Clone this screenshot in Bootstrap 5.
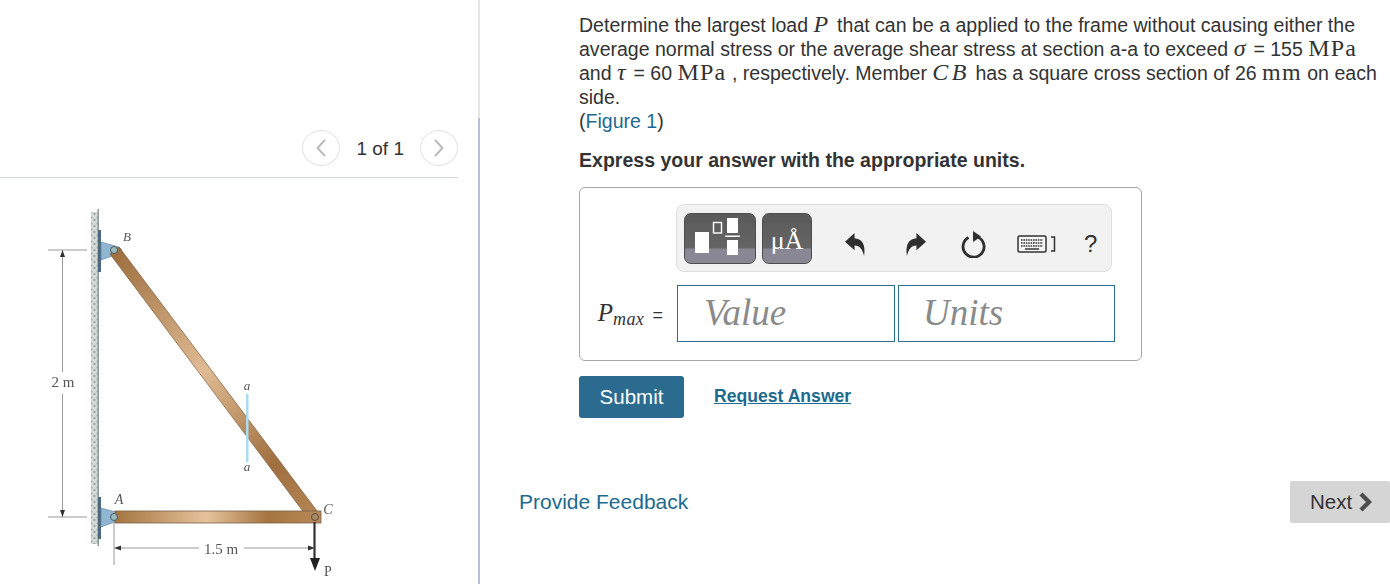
<!DOCTYPE html>
<html lang="en">
<head>
<meta charset="utf-8">
<title>Problem</title>
<link href="https://cdn.jsdelivr.net/npm/bootstrap@5.3.0/dist/css/bootstrap.min.css" rel="stylesheet">
<style>
html,body{height:584px;overflow:hidden;background:#fff}
body{font-family:"Liberation Sans",Arial,sans-serif;font-size:19.550px;line-height:24px;color:#333}
.stage{width:1390px;height:584px}
.fig-pane{width:478px;flex:none}
.pager{width:458px;height:178px;padding-top:130px;border-bottom:1px solid #d4d7da;gap:16px;color:#333}
.page-count{font-size:19px;line-height:38px}
.round-btn{width:38px;height:36px;padding:0;border:1px solid #e4e4e4;border-radius:50%;background:#fff;line-height:0}
.pane-rule{width:2px;flex:none;background:linear-gradient(to bottom,#e6e6e6 0,#e6e6e6 118px,#b3c4da 118px,#b3c4da 100%)}
.fig-svg{display:block;width:458px;height:406px}
.q-pane{flex:1;min-width:0;padding-top:13px}
.q-body{margin-left:99px;width:806px}
.q-text{margin:0}
.q-math{font-family:"Liberation Serif","DejaVu Serif",serif;font-size:24px;line-height:0;letter-spacing:1.200px}
.q-ital{font-style:italic;letter-spacing:2.500px}
.q-wide{letter-spacing:3.500px}
.q-link{color:#1d6a8f;text-decoration:none}
.q-lead{margin:15px 0 0;font-weight:700;color:#333}
.ans-box{width:563px;height:174px;margin-top:15px;border:1px solid #a6a6a6;border-radius:6px;padding:16px 26px 0 17px;background:#fff;font-size:18px}
.tool-strip{margin-left:79px;width:436px;height:68px;padding:7px;background:#f2f2f2;border:1px solid #dedede;border-radius:8px}
.tool-key{height:51px;padding:0;border:1px solid #4d4d4d;border-radius:7px;overflow:hidden;background:linear-gradient(to bottom,#5a5a5a 0,#646464 34px,#8a8794 35px,#8a8794 100%);line-height:0}
.tool-w1{width:72px}
.tool-w2{width:50px;margin-left:6px}
.tool-icon{background:none;border:0;padding:0;line-height:0;color:#333;margin-top:12px}
.tool-undo{margin-left:33px}
.tool-redo{margin-left:39px}
.tool-reset{margin-left:35px}
.tool-keys{margin-left:31px}
.tool-help{margin:11px 0 0 28px;font-size:24px;line-height:1;color:#333}
.ans-row{margin-top:13px;height:57px}
.var-label{width:80px;font-family:"Liberation Serif",serif;font-size:25px;color:#333;white-space:nowrap;padding-right:14px;text-align:right}
.var-label sub{font-size:18px;font-style:italic;bottom:-.25em;letter-spacing:.4px}
.var-label i{font-style:italic}
.var-eq{font-family:"Liberation Sans",sans-serif;font-size:18px;font-style:normal;margin-left:2px}
.ans-input{width:218px;height:57px;border:1px solid #2b6e92;border-radius:0;padding:0 0 2px 26px;font-family:"Liberation Serif",serif;font-style:italic;font-size:37px;color:#888}
.ans-input::placeholder{color:#8a8a8a;opacity:1}
.ans-input+.ans-input{margin-left:3px;width:217px;padding-left:24px}
.act-row{margin-top:15px;gap:30px}
.go-btn{width:105px;height:42px;padding:0;background:#2b6b8f;border:0;border-radius:3px;color:#fff;font-size:20.500px}
.ask-link{font-size:17.600px;font-weight:700;color:#1d6a8f;text-decoration:underline;margin-bottom:2px}
.foot-row{margin-top:63px;padding-left:39px}
.fb-link{font-size:21px;color:#1d6a8f;text-decoration:none}
.next-btn{width:100px;height:42px;padding:0 0 0 2px;background:#d5d5d5;border:0;border-radius:2px;color:#333;font-size:20.500px}
.next-btn svg{vertical-align:-3px}
</style>
</head>
<body>
<div class="stage d-flex">
  <div class="fig-pane">
    <div class="pager d-flex justify-content-end align-items-start">
      <button type="button" class="round-btn" aria-label="Previous"><svg width="12" height="20" viewBox="0 0 12 20"><path d="M10 2 2.500 10 10 18" fill="none" stroke="#bbb" stroke-width="2"/></svg></button>
      <span class="page-count">1 of 1</span>
      <button type="button" class="round-btn" aria-label="Next"><svg width="12" height="20" viewBox="0 0 12 20"><path d="M2 2 9.500 10 2 18" fill="none" stroke="#bbb" stroke-width="2"/></svg></button>
    </div>
    <svg class="fig-svg" viewBox="0 178 458 406" role="img" aria-label="Frame diagram">
      <defs>
        <linearGradient id="barA" x1="114" x2="320" y1="0" y2="0" gradientUnits="userSpaceOnUse">
          <stop offset="0" stop-color="#a4743f"/><stop offset=".45" stop-color="#e6c29c"/><stop offset=".75" stop-color="#a4743f"/><stop offset="1" stop-color="#b98a58"/>
        </linearGradient>
        <linearGradient id="barB" x1="114" y1="250" x2="315" y2="517" gradientUnits="userSpaceOnUse">
          <stop offset="0" stop-color="#9c6d3d"/><stop offset=".45" stop-color="#e0bb94"/><stop offset=".8" stop-color="#a06f3f"/><stop offset="1" stop-color="#b58554"/>
        </linearGradient>
        <pattern id="grit" width="6" height="6" patternUnits="userSpaceOnUse">
          <rect width="6" height="6" fill="#d3dad6"/><circle cx="1.500" cy="1.500" r="1" fill="#9aa8a2"/><circle cx="4.500" cy="4" r=".9" fill="#84948d"/>
        </pattern>
        <filter id="soft"><feGaussianBlur stdDeviation=".6"/></filter>
        <filter id="softer"><feGaussianBlur stdDeviation=".3"/></filter>
      </defs>
      <g filter="url(#soft)">
        <rect x="91" y="212" width="8" height="332" fill="url(#grit)"/>
        <rect x="97.500" y="209" width="1.500" height="337" fill="#8b9a9c"/>
        <rect x="98" y="230" width="3" height="42" fill="#4d6a7c"/>
        <rect x="98" y="497" width="3" height="42" fill="#4d6a7c"/>
        <path d="M101 242 119 247 122 250 115 255 101 260Z" fill="#8fb6d2" stroke="#5f8198" stroke-width=".6"/>
        <path d="M101 508 116 512 119 517 115 522 101 527Z" fill="#8fb6d2" stroke="#5f8198" stroke-width=".6"/>
        <path d="M119 247 110 254 311 522 320 515Z" fill="url(#barB)" stroke="#7b5a3c" stroke-width=".7"/>
        <rect x="115" y="511" width="206" height="12" fill="url(#barA)" stroke="#75604a" stroke-width=".8"/>
        <circle cx="114" cy="250" r="3.500" fill="#9bb" stroke="#4a5a63"/>
        <circle cx="114" cy="517" r="3.500" fill="#9bb" stroke="#4a5a63"/>
        <circle cx="315" cy="517" r="3.500" fill="#a98a68" stroke="#5e4a38"/>
        <rect x="246" y="394" width="2.500" height="68" fill="#abdcf0"/>
        <path d="M314.500 522V560" stroke="#333" stroke-width="2.200"/>
        <path d="M310 558H320L315 571Z" fill="#222"/>
        <g stroke="#999" stroke-width="1" fill="none">
          <path d="M48 250H87M48 517H87M62.500 250V372M62.500 394V517"/>
          <path d="M114 522V565M116 548H199M244 548H314"/>
        </g>
        <path d="M62.500 250 60 257H65ZM62.500 517 60 510H65ZM114 548 121 545.500V550.500ZM315 548 308 545.500V550.500Z" fill="#333"/>
      </g>
      <g font-family="'Liberation Serif',serif" fill="#555" font-size="14" filter="url(#softer)">
        <text x="63" y="387" text-anchor="middle" font-size="15">2 m</text>
        <text x="221" y="554" text-anchor="middle" font-size="15">1.5 m</text>
        <text x="127" y="241" text-anchor="middle" font-style="italic" font-size="13">B</text>
        <text x="119" y="504" text-anchor="middle" font-style="italic">A</text>
        <text x="328" y="514" text-anchor="middle" font-style="italic">C</text>
        <text x="328" y="576" text-anchor="middle">P</text>
        <text x="247" y="390" text-anchor="middle" font-style="italic" font-size="13">a</text>
        <text x="247" y="471" text-anchor="middle" font-style="italic" font-size="13">a</text>
      </g>
    </svg>
  </div>
  <div class="pane-rule"></div>
  <div class="q-pane">
    <div class="q-body">
      <p class="q-text">Determine the largest load <span class="q-math q-ital q-wide">P</span> that can be a applied to the frame without causing either the average normal stress or the average shear stress at section a-a to exceed <span class="q-math q-ital">σ</span> = 155 <span class="q-math">MPa</span> and <span class="q-math q-ital">τ</span> = 60 <span class="q-math">MPa</span> , respectively. Member <span class="q-math q-ital q-wide">CB</span> has a square cross section of 26 <span class="q-math">mm</span> on each side.<br>(<a href="#" class="q-link">Figure 1</a>)</p>
      <p class="q-lead">Express your answer with the appropriate units.</p>
      <div class="ans-box">
        <div class="tool-strip d-flex align-items-center">
          <button type="button" class="tool-key tool-w1" aria-label="Templates">
            <svg width="70" height="49" viewBox="0 0 70 49"><path fill="#fff" d="M10 18H24V39H10ZM42 4H53V19H42ZM42 26H53V41H42ZM40 21.500H55V23H40Z"/><rect x="28.500" y="8.500" width="8" height="10.500" fill="none" stroke="#fff" stroke-width="1.400"/></svg>
          </button>
          <button type="button" class="tool-key tool-w2" aria-label="Units">
            <svg width="48" height="49" viewBox="0 0 48 49"><text x="24" y="35" text-anchor="middle" font-family="'Liberation Serif',serif" font-size="26" fill="#fff">μÅ</text></svg>
          </button>
          <button type="button" class="tool-icon tool-undo" aria-label="Undo"><svg width="21" height="23" viewBox="0 0 22 24"><path fill="#2f2f2f" d="M0 9 10 0V5.500C17 6 22 11 20 24 18 16 15 13 10 13V18Z"/></svg></button>
          <button type="button" class="tool-icon tool-redo" aria-label="Redo"><svg width="21" height="23" viewBox="0 0 22 24"><path fill="#2f2f2f" d="M22 9 12 0V5.500C5 6 0 11 2 24 4 16 7 13 12 13V18Z"/></svg></button>
          <button type="button" class="tool-icon tool-reset" aria-label="Reset"><svg width="25" height="27" viewBox="0 0 25 27"><path fill="none" stroke="#2f2f2f" stroke-width="2.800" d="M7.500 6.500A10.500 10.500 0 1 0 15 5.500"/><path fill="#2f2f2f" d="M12 0 20 5.500 12 11Z"/></svg></button>
          <button type="button" class="tool-icon tool-keys d-flex align-items-center" aria-label="Keyboard"><svg width="30" height="18" viewBox="0 0 30 18"><rect x="1" y="1" width="28" height="16" rx="1.500" fill="#f7f7f7" stroke="#333" stroke-width="1.500"/><path stroke="#666" stroke-width="2" stroke-dasharray="1.600 .8" d="M4 5H26M4 8H26M4 11H26"/><path stroke="#666" stroke-width="2" d="M8 14H22"/></svg><svg class="ms-1" width="5" height="16" viewBox="0 0 5 16"><path fill="none" stroke="#333" stroke-width="1.500" d="M0 1H3.500V15H0"/></svg></button>
          <span class="tool-help">?</span>
        </div>
        <div class="ans-row d-flex align-items-center">
          <div class="var-label"><i>P</i><sub>max</sub> <span class="var-eq">=</span></div>
          <input class="ans-input" type="text" placeholder="Value" aria-label="Value">
          <input class="ans-input" type="text" placeholder="Units" aria-label="Units">
        </div>
      </div>
      <div class="act-row d-flex align-items-center">
        <button type="button" class="go-btn">Submit</button>
        <a href="#" class="ask-link">Request Answer</a>
      </div>
    </div>
    <div class="foot-row d-flex justify-content-between align-items-center">
      <a href="#" class="fb-link">Provide Feedback</a>
      <button type="button" class="next-btn">Next <svg width="14" height="20" viewBox="0 0 14 20"><path d="M3 2 11 10 3 18" fill="none" stroke="#4d4d4d" stroke-width="4.400"/></svg></button>
    </div>
  </div>
</div>
<script src="https://cdn.jsdelivr.net/npm/bootstrap@5.3.0/dist/js/bootstrap.bundle.min.js"></script>
</body>
</html>
